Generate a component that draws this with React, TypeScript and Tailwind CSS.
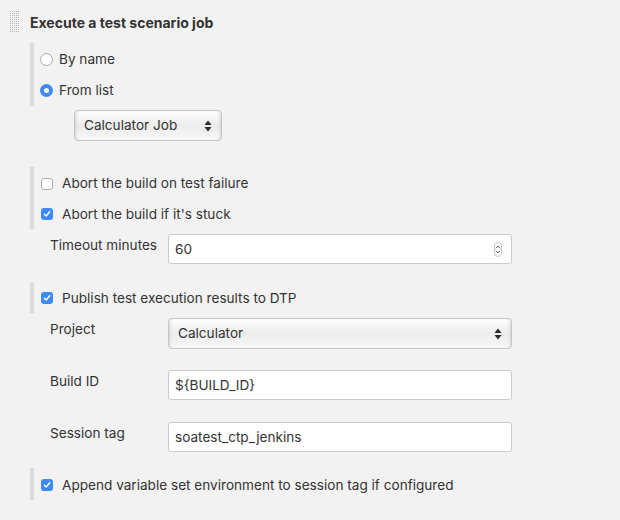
import React from 'react';

const font = { fontFamily: 'Inter, "Noto Sans", sans-serif' };

function Grip() {
  const dots = [];
  for (let y = 0; y < 11; y++) {
    for (let x = 0; x < 5; x++) {
      dots.push(<rect key={`${x}-${y}`} x={x * 2} y={y * 2} width="1" height="1" fill="#b5b5b5" />);
    }
  }
  return (
    <svg width="10" height="22" viewBox="0 0 10 22" className="shrink-0">
      {dots}
    </svg>
  );
}

function Radio({ checked }: { checked?: boolean }) {
  return checked ? (
    <span className="w-[13px] h-[13px] rounded-full bg-[#3d8af7] flex items-center justify-center shrink-0">
      <span className="w-[5px] h-[5px] rounded-full bg-white" />
    </span>
  ) : (
    <span className="w-[13px] h-[13px] rounded-full bg-white border border-[#a9a9a9] shrink-0" />
  );
}

function Check({ checked }: { checked?: boolean }) {
  return checked ? (
    <span className="w-[12px] h-[12px] rounded-[3px] bg-[#3d8af7] flex items-center justify-center shrink-0">
      <svg width="8" height="8" viewBox="0 0 8 8">
        <path d="M1.3 4.2 L3.2 6 L6.7 1.8" stroke="white" strokeWidth="1.4" fill="none" strokeLinecap="round" strokeLinejoin="round" />
      </svg>
    </span>
  ) : (
    <span className="w-[12px] h-[12px] rounded-[3px] bg-white border border-[#acacac] shrink-0" />
  );
}

function SelectArrows() {
  return (
    <svg width="8" height="12" viewBox="0 0 8 12" className="shrink-0">
      <path d="M4 0.5 L7.5 5 L0.5 5 Z" fill="#2b2b2b" />
      <path d="M4 11.5 L7.5 7 L0.5 7 Z" fill="#2b2b2b" />
    </svg>
  );
}

function Select({ value, className }: { value: string; className: string }) {
  return (
    <div
      className={`flex items-center justify-between pl-[9px] pr-[9px] rounded-[4px] border border-[#c6c6c6] bg-gradient-to-b from-[#fdfdfd] via-[#ececec] to-[#f7f7f7] shadow-[inset_3px_0_3px_-2px_rgba(0,0,0,0.12),inset_-3px_0_3px_-2px_rgba(0,0,0,0.12)] ${className}`}
    >
      <span>{value}</span>
      <SelectArrows />
    </div>
  );
}

function Bar({ children, className }: { children: React.ReactNode; className: string }) {
  return <div className={`ml-[30px] border-l-[4px] border-[#dcdcdc] ${className}`}>{children}</div>;
}

function Field({ label, children, className }: { label: string; children: React.ReactNode; className: string }) {
  return (
    <div className={`flex ml-[50px] ${className}`}>
      <div className="w-[118px] pt-[1px] leading-[20px]">{label}</div>
      {children}
    </div>
  );
}

function TextBox({ value, children }: { value: string; children?: React.ReactNode }) {
  return (
    <div className="w-[344px] h-[30px] bg-white border border-[#cbcbcb] rounded-[3px] flex items-center justify-between pl-[6px] pr-[9px]">
      <span>{value}</span>
      {children}
    </div>
  );
}

function Spinner() {
  return (
    <span className="w-[8px] h-[15px] rounded-[4px] border border-[#c4c4c4] flex flex-col items-center justify-center gap-[1px]">
      <svg width="6" height="4" viewBox="0 0 6 4">
        <path d="M1 3.3 L3 1 L5 3.3" stroke="#555" strokeWidth="1" fill="none" />
      </svg>
      <svg width="6" height="4" viewBox="0 0 6 4">
        <path d="M1 0.7 L3 3 L5 0.7" stroke="#555" strokeWidth="1" fill="none" />
      </svg>
    </span>
  );
}

export default function App() {
  return (
    <div className="w-[620px] h-[520px] bg-[#f2f2f2] text-[#333] text-[13.6px] overflow-hidden" style={font}>
      <div className="pt-[11px]">
        {/* header */}
        <div className="flex items-center h-[22px] pl-[10px] gap-[10px]">
          <Grip />
          <span className="font-bold text-[14px] text-[#333]">Execute a test scenario job</span>
        </div>

        {/* job choice */}
        <Bar className="mt-[10px] pt-[1px] h-[63px]">
          <div className="flex items-center h-[31px] pl-[6px] gap-[6px]">
            <Radio />
            <span>By name</span>
          </div>
          <div className="flex items-center h-[31px] pl-[6px] gap-[6px]">
            <Radio checked />
            <span>From list</span>
          </div>
        </Bar>
        <div className="ml-[74px] mt-[4px]">
          <Select value="Calculator Job" className="w-[148px] h-[31px]" />
        </div>

        {/* abort options */}
        <Bar className="mt-[26px] h-[62px]">
          <div className="flex items-center h-[31px] pl-[7px] gap-[9px] pt-[2px]">
            <Check />
            <span>Abort the build on test failure</span>
          </div>
          <div className="flex items-center h-[31px] pl-[7px] gap-[9px] pt-[1px]">
            <Check checked />
            <span>Abort the build if it's stuck</span>
          </div>
        </Bar>
        <Field label="Timeout minutes" className="mt-[5px]">
          <TextBox value="60">
            <Spinner />
          </TextBox>
        </Field>

        {/* DTP */}
        <Bar className="mt-[18px] h-[31px] flex items-center pl-[7px] gap-[9px] pt-[1px]">
          <Check checked />
          <span>Publish test execution results to DTP</span>
        </Bar>
        <Field label="Project" className="mt-[5px]">
          <Select value="Calculator" className="w-[344px] h-[31px]" />
        </Field>
        <Field label="Build ID" className="mt-[21px]">
          <TextBox value="${BUILD_ID}" />
        </Field>
        <Field label="Session tag" className="mt-[22px]">
          <TextBox value="soatest_ctp_jenkins" />
        </Field>

        <Bar className="mt-[16px] h-[32px] flex items-center pl-[7px] gap-[9px] pt-[2px]">
          <Check checked />
          <span>Append variable set environment to session tag if configured</span>
        </Bar>
      </div>
    </div>
  );
}
